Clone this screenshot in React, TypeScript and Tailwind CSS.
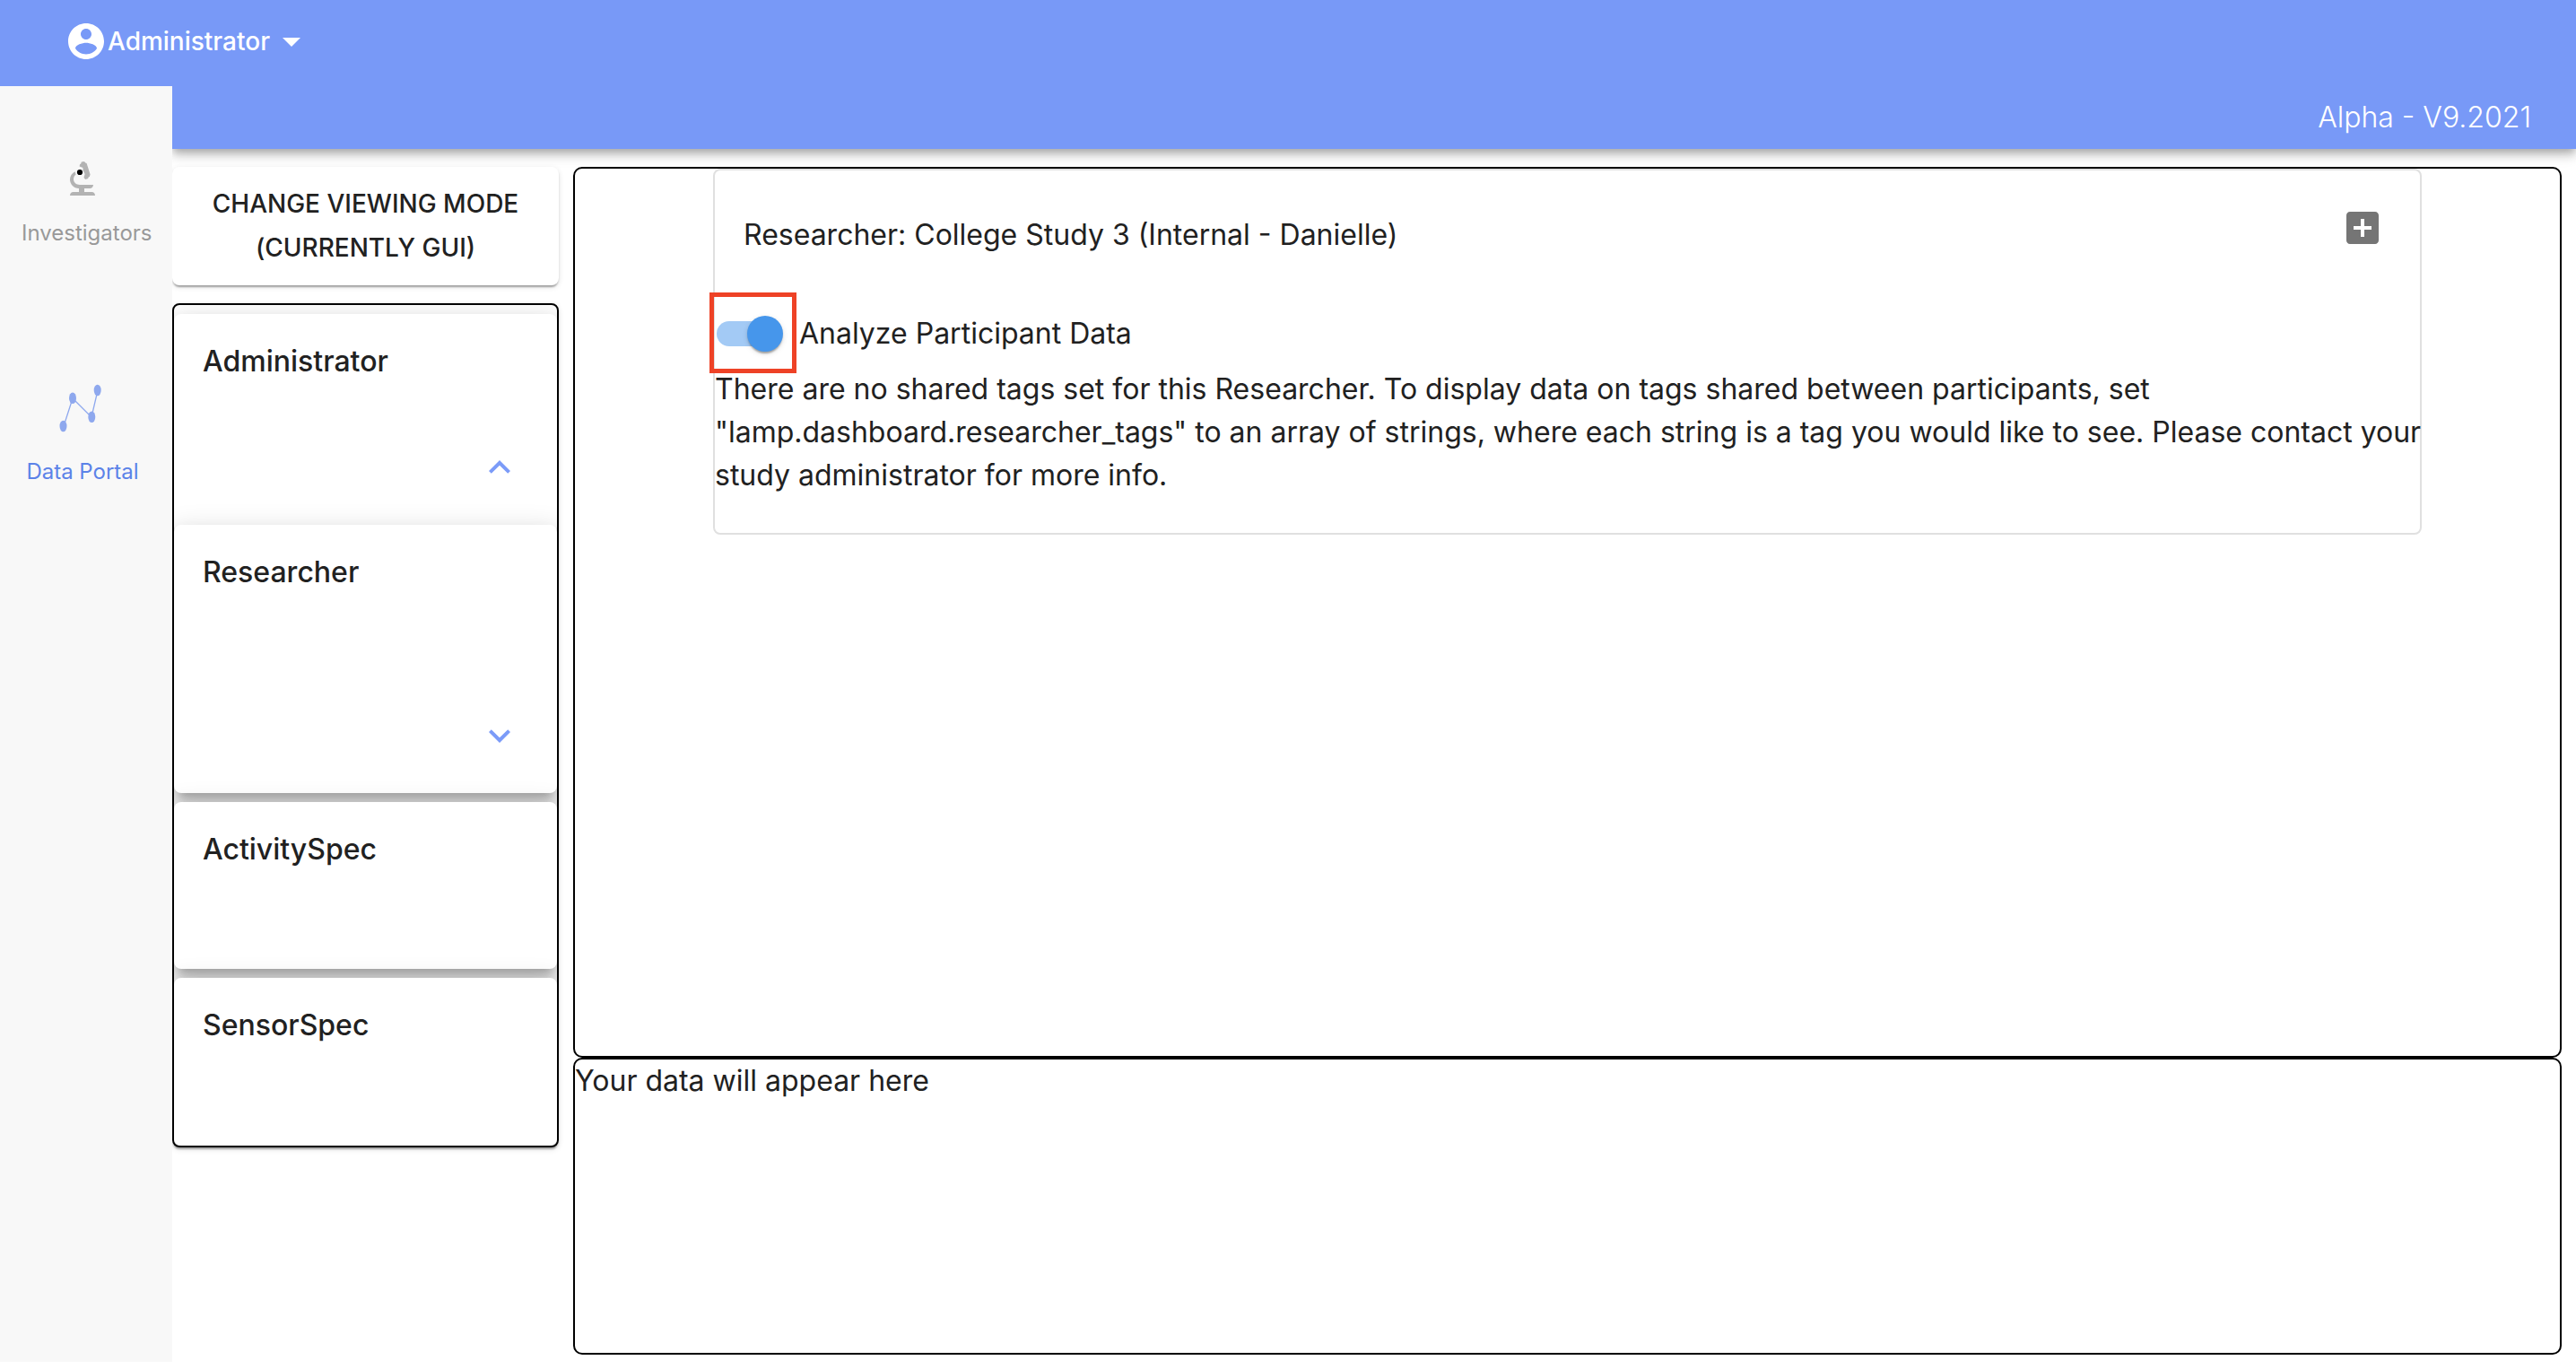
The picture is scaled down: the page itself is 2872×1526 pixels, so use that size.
import { useState } from "react";

const cardShadow =
  "shadow-[0_10px_10px_-6px_rgba(0,0,0,0.2),0_16px_20px_2px_rgba(0,0,0,0.14),0_6px_28px_4px_rgba(0,0,0,0.12)]";

function Glyph({ d }: { d: string }) {
  return (
    <svg viewBox="0 0 24 24" aria-hidden="true" className="size-12 shrink-0 fill-current">
      <path d={d} />
    </svg>
  );
}

const ACCOUNT =
  "M12 2C6.48 2 2 6.48 2 12s4.48 10 10 10 10-4.48 10-10S17.52 2 12 2zm0 3c1.66 0 3 1.34 3 3s-1.34 3-3 3-3-1.34-3-3 1.34-3 3-3zm0 14.2c-2.5 0-4.71-1.28-6-3.22.03-1.99 4-3.08 6-3.08 1.99 0 5.97 1.09 6 3.08-1.29 1.94-3.5 3.22-6 3.22z";
const ARROW_DOWN = "M7 10l5 5 5-5z";
const ADD_BOX =
  "M19 3H5c-1.11 0-2 .9-2 2v14c0 1.1.89 2 2 2h14c1.1 0 2-.9 2-2V5c0-1.1-.9-2-2-2zm-2 10h-4v4h-2v-4H7v-2h4V7h2v4h4v2z";
const LESS = "M12 8l-6 6 1.41 1.41L12 10.83l4.59 4.58L18 14z";
const MORE = "M16.59 8.59L12 13.17 7.41 8.59 6 10l6 6 6-6z";

function MicroscopeIcon() {
  return (
    <svg viewBox="0 0 28 38" aria-hidden="true" className="h-[38px] w-7" fill="#b3b3b3">
      <path d="M11 3.2 12.2 2.6 12.8.6 16 .1 17.2 1.6 18.6 2 22.6 14.6 21.8 17 20.6 17.6 20.2 19 17.2 20 15.8 18.6 15.6 17.6 16.6 14 14.6 10 14.4 7 10.6 5.4z" />
      <path d="M5.6 11.2C2 13 0 16.4 0 20c0 5.4 4.2 10 10 10h12.2c2 0 3.6-1.6 3.8-4H11c-4 0-7-2.8-7-6.2 0-2.2 1-4 2.6-5.2z" />
      <path d="M10 29.500h6V34h-6z" />
      <path d="M0 38c0-2.600 1.600-4 3.600-4h20.800c2 0 3.600 1.400 3.600 4z" />
      <circle cx="11" cy="12" r="3.100" fill="#000" />
    </svg>
  );
}

function DataPortalIcon() {
  return (
    <svg viewBox="2 0 48 54" aria-hidden="true" className="h-[54px] w-12 overflow-visible" fill="#8ea8ee" stroke="#8ea8ee">
      <path d="M5 47 15 16 36 37 43 7" fill="none" strokeWidth="1.3" />
      <g stroke="none">
        <ellipse cx="4.500" cy="47" rx="4" ry="6.300" />
        <ellipse cx="15" cy="15.700" rx="4" ry="6.300" />
        <ellipse cx="36.300" cy="36.700" rx="4" ry="6.300" />
        <ellipse cx="42.700" cy="7" rx="4" ry="6.300" />
      </g>
    </svg>
  );
}

function NavCard({ title, toggle, className }: { title: string; toggle?: "less" | "more"; className: string }) {
  return (
    <section className={`flex flex-col justify-between rounded-lg bg-white ${cardShadow} ${className}`}>
      <h2 className="px-8 pt-[29px] text-[32px] leading-[48px] font-medium">{title}</h2>
      {toggle && (
        <button
          type="button"
          aria-label={toggle === "less" ? `Collapse ${title}` : `Expand ${title}`}
          className="mr-4 mb-4 self-end p-6 text-[#7b9bf8]"
        >
          <Glyph d={toggle === "less" ? LESS : MORE} />
        </button>
      )}
    </section>
  );
}

export default function App() {
  const [analyze, setAnalyze] = useState(true);

  return (
    <div className="flex min-h-screen flex-col bg-white font-['Inter',sans-serif] text-[#212121]">
      <header className="relative z-10 flex h-24 items-start bg-[#7899f7] px-[72px] pt-[22px] text-white">
        <button type="button" className="flex items-center text-[28px] leading-[48px] font-medium">
          <Glyph d={ACCOUNT} />
          Administrator
          <Glyph d={ARROW_DOWN} />
        </button>
      </header>

      <div className="flex flex-1">
        <nav className="relative z-10 mb-2 flex w-48 shrink-0 flex-col bg-[#f8f8f8] px-6 text-2xl leading-8">
          <a href="#investigators" className="mt-[84px] flex w-[136px] flex-col items-center gap-[26px] text-[#999999]">
            <MicroscopeIcon />
            <span className="self-start whitespace-nowrap">Investigators</span>
          </a>
          <a href="#data-portal" className="mt-[152px] flex w-[136px] flex-col items-center gap-7 text-[#5b82e8]">
            <DataPortalIcon />
            <span className="whitespace-nowrap">Data Portal</span>
          </a>
        </nav>

        <div className="flex min-w-0 flex-1 flex-col">
          <div className="flex h-[70px] items-start justify-end bg-[#7899f7] px-[50px] pt-[11px] text-[32px] leading-[48px] font-light text-white shadow-[0_4px_8px_-2px_rgba(0,0,0,0.2),0_8px_10px_0_rgba(0,0,0,0.14),0_2px_20px_0_rgba(0,0,0,0.12)]">
            Alpha - V9.2021
          </div>

          <div className="flex flex-1 gap-4 pt-5 pr-4 pb-4">
            <aside className="flex w-[431px] shrink-0 flex-col gap-5">
              <button
                type="button"
                className="rounded-lg bg-white px-8 py-[17px] text-[28px] leading-[49px] font-medium uppercase shadow-[0_4px_2px_-2px_rgba(0,0,0,0.2),0_2px_2px_0_rgba(0,0,0,0.14),0_2px_6px_0_rgba(0,0,0,0.12)]"
              >
                Change viewing mode (currently GUI)
              </button>

              <div className="rounded-lg shadow-[0_4px_2px_-2px_rgba(0,0,0,0.2),0_2px_2px_0_rgba(0,0,0,0.14),0_2px_6px_0_rgba(0,0,0,0.12)]">
                <div className="flex flex-col overflow-hidden rounded-lg border-2 border-black bg-white">
                  <NavCard title="Administrator" toggle="less" className="mt-[10px] min-h-[245px] pb-[10px]" />
                  <NavCard title="Researcher" toggle="more" className="-mt-[10px] min-h-[299px]" />
                  <NavCard title="ActivitySpec" className="mt-[10px] min-h-[186px]" />
                  <NavCard title="SensorSpec" className="mt-[10px] min-h-[187px]" />
                </div>
              </div>
            </aside>

            <main className="grid min-w-0 flex-1 grid-rows-[3fr_1fr] text-[32px] leading-[48px]">
              <section className="rounded-[10px] border-2 border-black bg-white px-[154px]">
                <article className="rounded-lg border-2 border-[#e0e0e0] pb-10">
                  <div className="flex items-center justify-between py-8 pr-4 pl-8">
                    <h1>Researcher: College Study 3 (Internal - Danielle)</h1>
                    <button type="button" aria-label="Add widget" className="-mt-4 p-6 text-[#757575]">
                      <Glyph d={ADD_BOX} />
                    </button>
                  </div>
                  <div className="flex h-[76px] items-center">
                    <div className="relative flex h-full w-[94px] items-center pl-0.5">
                      <input
                        id="analyze"
                        type="checkbox"
                        role="switch"
                        checked={analyze}
                        onChange={(event) => setAnalyze(event.target.checked)}
                        className="relative h-7 w-[68px] appearance-none rounded-full bg-gray-400 before:absolute before:-top-1.5 before:-left-1.5 before:size-10 before:rounded-full before:bg-gray-50 before:shadow-[0_4px_2px_-2px_rgba(0,0,0,0.2),0_2px_2px_0_rgba(0,0,0,0.14),0_2px_6px_0_rgba(0,0,0,0.12)] checked:bg-[#a3caf5] checked:before:left-[34px] checked:before:bg-[#4696eb]"
                      />
                      <span className="pointer-events-none absolute -top-2 -left-1.5 h-[90px] w-[97px] border-[5px] border-[#ee4226]" />
                    </div>
                    <label htmlFor="analyze">Analyze Participant Data</label>
                  </div>
                  <p className="-mr-4">
                    There are no shared tags set for this Researcher. To display data on tags shared between
                    participants, set "lamp.dashboard.researcher_tags" to an array of strings, where each string is a
                    tag you would like to see. Please contact your study administrator for more info.
                  </p>
                </article>
              </section>
              <section className="rounded-[10px] border-2 border-black bg-white">
                <p>Your data will appear here</p>
              </section>
            </main>
          </div>
        </div>
      </div>
    </div>
  );
}
